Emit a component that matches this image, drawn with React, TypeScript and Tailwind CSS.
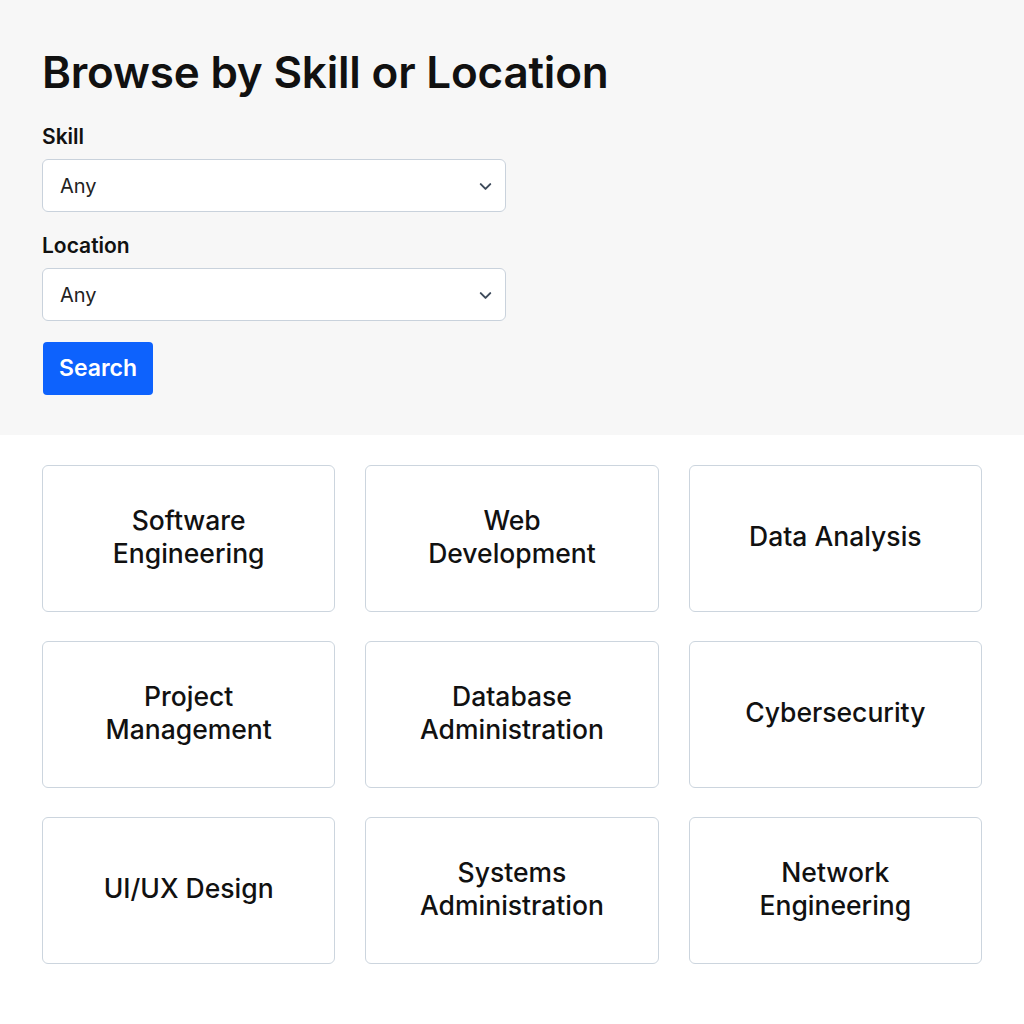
import { ChevronDown } from 'lucide-react';

const skills = [
    'Software Engineering',
    'Web Development',
    'Data Analysis',
    'Project Management',
    'Database Administration',
    'Cybersecurity',
    'UI/UX Design',
    'Systems Administration',
    'Network Engineering',
];

function SelectField({ label }: { label: string }) {
    return (
        <div className="flex flex-col">
            <label className="text-[21px] font-semibold leading-[24px] text-[#111] mb-[10px]">{label}</label>
            <div className="relative w-[464px] h-[53px] bg-white border border-[#c9d2dc] rounded-[6px] flex items-center px-[17px]">
                <span className="text-[20px] text-[#222]">Any</span>
                <ChevronDown className="absolute right-[10px] top-[17px] w-[19px] h-[19px] text-[#3d4a5a]" strokeWidth={2.5} />
            </div>
        </div>
    );
}

export default function App() {
    return (
        <div className="min-h-[1024px] bg-white font-['Inter',sans-serif] text-[#111]">
            <div className="bg-[#f7f7f7] h-[435px]">
                <div className="w-[940px] mx-auto pt-[44px]">
                    <h1 className="text-[44px] font-semibold leading-[56px] tracking-[-0.2px]">Browse by Skill or Location</h1>
                    <div className="mt-[25px] flex flex-col gap-[22px]">
                        <SelectField label="Skill" />
                        <SelectField label="Location" />
                    </div>
                    <button className="mt-[21px] ml-px w-[110px] h-[53px] bg-[#0d62fd] rounded-[4px] text-white text-[23px] font-semibold">
                        Search
                    </button>
                </div>
            </div>
            <div className="w-[940px] mx-auto pt-[30px] grid grid-cols-3 gap-x-[30px] gap-y-[29px]">
                {skills.map((s) => (
                    <div
                        key={s}
                        className="h-[147px] bg-white border border-[#ccd5de] rounded-[6px] flex items-center justify-center px-[40px] pb-[4px]"
                    >
                        <span className="text-[26.5px] leading-[33px] font-medium text-center text-[#111]">{s}</span>
                    </div>
                ))}
            </div>
        </div>
    );
}
